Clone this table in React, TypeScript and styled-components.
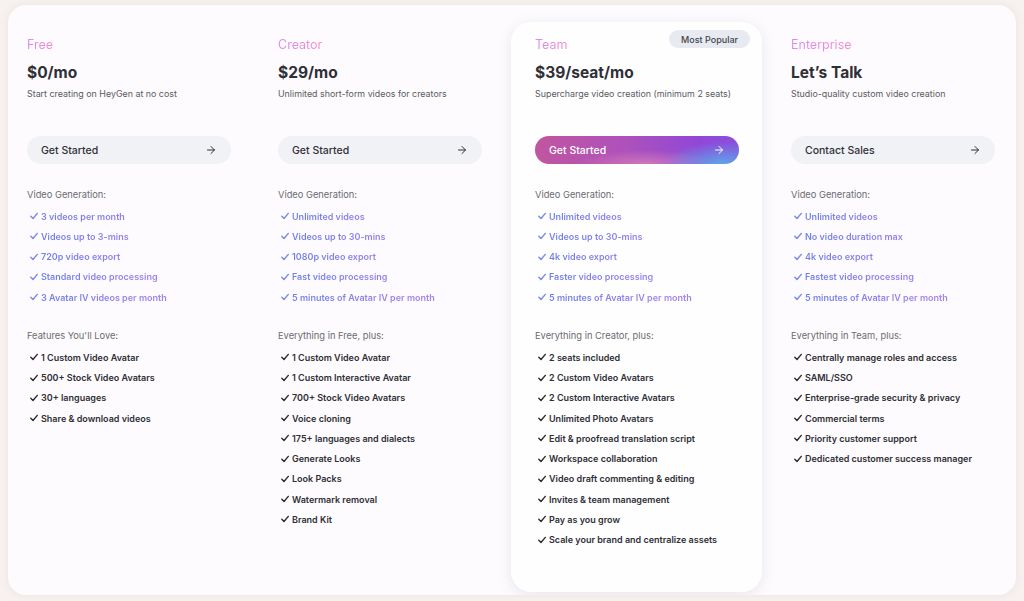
import styled, { createGlobalStyle } from "styled-components";
import { ArrowRight } from "lucide-react";

const GlobalStyle = createGlobalStyle`
  html, body {
    margin: 0;
    padding: 0;
    background: #f7f1ef;
  }
  body {
    font-family: Inter, "Noto Sans", sans-serif;
    color: #2c2c33;
  }
`;

const Frame = styled.main`
  margin: 5px 8px 6px;
  height: 590px;
  box-sizing: border-box;
  padding-top: 17px;
  background: #fdfbfd;
  border-radius: 18px;
  box-shadow: 0 0 6px rgba(230, 215, 210, 0.5);
  overflow: hidden;
`;

const Grid = styled.div`
  display: grid;
  grid-template-columns: 246px 257px 256px 1fr;
  align-items: start;
`;

const Column = styled.section<{ $featured?: boolean }>`
  position: relative;
  box-sizing: border-box;
  padding: 14px 24px 42px;
  ${(p) =>
    p.$featured &&
    `
    width: 251px;
    background: #fefeff;
    border-radius: 20px;
    box-shadow: 0 3px 14px rgba(120, 125, 160, 0.16);
  `}
  &:first-child {
    padding-left: 19px;
  }
`;

const Badge = styled.span`
  position: absolute;
  top: 8px;
  right: 12px;
  height: 18px;
  padding: 0 12px;
  display: flex;
  align-items: center;
  border-radius: 9px;
  background: #e7eaf1;
  color: #45464d;
  font-size: 9px;
  font-weight: 500;
`;

const PlanName = styled.h3`
  margin: 0;
  font-size: 12.5px;
  line-height: 18px;
  font-weight: 400;
  background: linear-gradient(90deg, #d98af5, #f48ccc);
  -webkit-background-clip: text;
  background-clip: text;
  color: transparent;
  width: fit-content;
`;

const Price = styled.div`
  margin-top: 9px;
  font-size: 15.5px;
  line-height: 20px;
  font-weight: 700;
  color: #2f2f36;
`;

const Desc = styled.p`
  margin: 4px 0 0;
  font-size: 8.9px;
  line-height: 14px;
  white-space: nowrap;
  color: #5a5a62;
`;

const Button = styled.button<{ $primary?: boolean }>`
  margin-top: 35px;
  width: 204px;
  height: 28px;
  border: none;
  border-radius: 14px;
  padding: 0 14px;
  display: flex;
  align-items: center;
  justify-content: space-between;
  font-family: inherit;
  font-size: 10.5px;
  font-weight: 500;
  color: ${(p) => (p.$primary ? "#ffffff" : "#2f2f36")};
  background: ${(p) =>
    p.$primary
      ? "radial-gradient(ellipse 60px 22px at 92% 100%, rgba(90, 170, 235, 0.95), rgba(90, 170, 235, 0) 100%), radial-gradient(ellipse 70px 14px at 55% 100%, rgba(240, 150, 180, 0.55), rgba(240, 150, 180, 0) 100%), linear-gradient(90deg, #c1569f 0%, #ad51bc 45%, #9147d6 80%, #8a4fdc 100%)"
      : "#f1f2f6"};
  cursor: pointer;
`;

const SectionTitle = styled.div<{ $gap: number }>`
  margin-top: ${(p) => p.$gap}px;
  font-size: 9.3px;
  line-height: 14px;
  color: #6b6b72;
`;

const List = styled.ul`
  list-style: none;
  margin: 4px 0 0;
  padding: 0;
`;

const Item = styled.li<{ $accent?: boolean }>`
  height: 20.25px;
  display: flex;
  align-items: center;
  gap: 3px;
  padding-left: 3px;
  font-size: 9px;
  font-weight: 600;
  color: #2f2f36;
  svg {
    flex: none;
    color: ${(p) => (p.$accent ? "#7b88e8" : "#2a2a30")};
  }
  span {
    ${(p) =>
      p.$accent &&
      `
      background: linear-gradient(90deg, #6f80e8, #a07ff0 120px);
      -webkit-background-clip: text;
      background-clip: text;
      color: transparent;
    `}
  }
`;

function Check() {
  return (
    <svg width="8" height="8" viewBox="0 0 8 8" fill="none">
      <path
        d="M0.8 4.3 L3 6.5 L7.3 1.4"
        stroke="currentColor"
        strokeWidth="1.4"
        strokeLinecap="round"
        strokeLinejoin="round"
      />
    </svg>
  );
}

type Plan = {
  name: string;
  price: string;
  desc: string;
  cta: string;
  featured?: boolean;
  video: string[];
  featuresTitle: string;
  features: string[];
};

const plans: Plan[] = [
  {
    name: "Free",
    price: "$0/mo",
    desc: "Start creating on HeyGen at no cost",
    cta: "Get Started",
    video: [
      "3 videos per month",
      "Videos up to 3-mins",
      "720p video export",
      "Standard video processing",
      "3 Avatar IV videos per month",
    ],
    featuresTitle: "Features You'll Love:",
    features: [
      "1 Custom Video Avatar",
      "500+ Stock Video Avatars",
      "30+ languages",
      "Share & download videos",
    ],
  },
  {
    name: "Creator",
    price: "$29/mo",
    desc: "Unlimited short-form videos for creators",
    cta: "Get Started",
    video: [
      "Unlimited videos",
      "Videos up to 30-mins",
      "1080p video export",
      "Fast video processing",
      "5 minutes of Avatar IV per month",
    ],
    featuresTitle: "Everything in Free, plus:",
    features: [
      "1 Custom Video Avatar",
      "1 Custom Interactive Avatar",
      "700+ Stock Video Avatars",
      "Voice cloning",
      "175+ languages and dialects",
      "Generate Looks",
      "Look Packs",
      "Watermark removal",
      "Brand Kit",
    ],
  },
  {
    name: "Team",
    price: "$39/seat/mo",
    desc: "Supercharge video creation (minimum 2 seats)",
    cta: "Get Started",
    featured: true,
    video: [
      "Unlimited videos",
      "Videos up to 30-mins",
      "4k video export",
      "Faster video processing",
      "5 minutes of Avatar IV per month",
    ],
    featuresTitle: "Everything in Creator, plus:",
    features: [
      "2 seats included",
      "2 Custom Video Avatars",
      "2 Custom Interactive Avatars",
      "Unlimited Photo Avatars",
      "Edit & proofread translation script",
      "Workspace collaboration",
      "Video draft commenting & editing",
      "Invites & team management",
      "Pay as you grow",
      "Scale your brand and centralize assets",
    ],
  },
  {
    name: "Enterprise",
    price: "Let’s Talk",
    desc: "Studio-quality custom video creation",
    cta: "Contact Sales",
    video: [
      "Unlimited videos",
      "No video duration max",
      "4k video export",
      "Fastest video processing",
      "5 minutes of Avatar IV per month",
    ],
    featuresTitle: "Everything in Team, plus:",
    features: [
      "Centrally manage roles and access",
      "SAML/SSO",
      "Enterprise-grade security & privacy",
      "Commercial terms",
      "Priority customer support",
      "Dedicated customer success manager",
    ],
  },
];

export default function App() {
  return (
    <>
      <GlobalStyle />
      <Frame>
        <Grid>
          {plans.map((plan) => (
            <Column key={plan.name} $featured={plan.featured}>
              {plan.featured && <Badge>Most Popular</Badge>}
              <PlanName>{plan.name}</PlanName>
              <Price>{plan.price}</Price>
              <Desc>{plan.desc}</Desc>
              <Button $primary={plan.featured}>
                {plan.cta}
                <ArrowRight size={12} strokeWidth={2} />
              </Button>
              <SectionTitle $gap={24}>Video Generation:</SectionTitle>
              <List>
                {plan.video.map((v) => (
                  <Item key={v} $accent>
                    <Check />
                    <span>{v}</span>
                  </Item>
                ))}
              </List>
              <SectionTitle $gap={22}>{plan.featuresTitle}</SectionTitle>
              <List>
                {plan.features.map((f) => (
                  <Item key={f}>
                    <Check />
                    <span>{f}</span>
                  </Item>
                ))}
              </List>
            </Column>
          ))}
        </Grid>
      </Frame>
    </>
  );
}
